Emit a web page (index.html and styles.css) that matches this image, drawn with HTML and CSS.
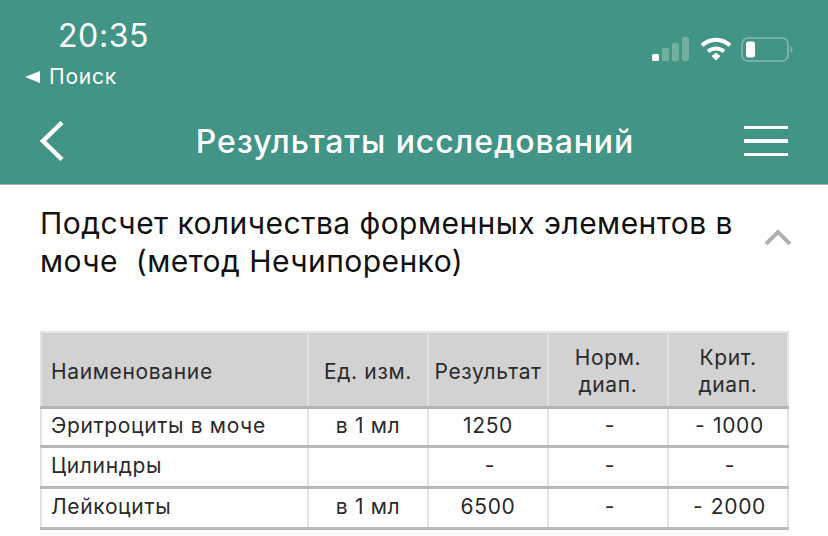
FILE: index.html
```html
<!DOCTYPE html>
<html lang="ru">
<head>
    <meta charset="UTF-8">
    <meta name="viewport" content="width=device-width, initial-scale=1.0">
    <title>Результаты исследований</title>
    <link rel="stylesheet" href="styles.css">
</head>
<body>

<header class="top">
    <div class="status">
        <div class="status-left">
            <div class="time">20:35</div>
            <div class="search"><span class="search-arrow"></span>Поиск</div>
        </div>
        <div class="status-right">
            <svg class="signal" width="38" height="24" viewBox="0 0 38 24">
                <rect x="0" y="17" width="7" height="7" rx="1.5" fill="#fff"/>
                <rect x="10" y="11" width="7" height="13" rx="1.5" fill="#fff" fill-opacity="0.25"/>
                <rect x="20" y="6" width="7" height="18" rx="1.5" fill="#fff" fill-opacity="0.25"/>
                <rect x="30" y="0" width="7" height="24" rx="1.5" fill="#fff" fill-opacity="0.25"/>
            </svg>
            <svg class="wifi" width="32" height="24" viewBox="0 0 32 24">
                <path d="M2 8.5C10 1 22 1 30 8.5" fill="none" stroke="#fff" stroke-width="4.2"/>
                <path d="M8 14.5C12.500 10.500 19.500 10.500 24 14.500" fill="none" stroke="#fff" stroke-width="4"/>
                <path d="M11.500 19L16 15.800L20.500 19L16 23.500Z" fill="#fff"/>
            </svg>
            <svg class="battery" width="54" height="26" viewBox="0 0 54 26">
                <rect x="1" y="1" width="46" height="23" rx="6" fill="none" stroke="#fff" stroke-opacity="0.35" stroke-width="1.600"/>
                <rect x="5" y="4.500" width="9" height="16" rx="2.500" fill="#fff"/>
                <path d="M49.500 9C52 10 52 15 49.500 16Z" fill="#fff" fill-opacity="0.35"/>
            </svg>
        </div>
    </div>
    <nav class="nav">
        <svg class="back" width="26" height="42" viewBox="0 0 26 42">
            <path d="M23 2.500L4 21L23 39.500" fill="none" stroke="#fff" stroke-width="4.500"/>
        </svg>
        <h1>Результаты исследований</h1>
        <div class="burger"><span></span><span></span><span></span></div>
    </nav>
</header>

<main class="content">
    <div class="title-row">
        <h2>Подсчет количества форменных элементов в моче&nbsp; (метод Нечипоренко)</h2>
        <svg class="chevron" width="28" height="16" viewBox="0 0 28 16">
            <path d="M2 15L14 3L26 15" fill="none" stroke="#b0b0b0" stroke-width="4"/>
        </svg>
    </div>

    <table class="results">
        <colgroup>
            <col class="col-name"><col class="col-std"><col class="col-std"><col class="col-std"><col class="col-std">
        </colgroup>
        <thead>
            <tr>
                <th class="name">Наименование</th>
                <th>Ед. изм.</th>
                <th>Результат</th>
                <th>Норм.<br>диап.</th>
                <th>Крит.<br>диап.</th>
            </tr>
        </thead>
        <tbody>
            <tr class="row-a">
                <td class="name">Эритроциты в моче</td>
                <td>в 1 мл</td>
                <td>1250</td>
                <td class="dash">-</td>
                <td class="crit">- 1000</td>
            </tr>
            <tr class="row-b">
                <td class="name">Цилиндры</td>
                <td></td>
                <td class="dash">-</td>
                <td class="dash">-</td>
                <td class="dash">-</td>
            </tr>
            <tr class="row-b">
                <td class="name">Лейкоциты</td>
                <td>в 1 мл</td>
                <td>6500</td>
                <td class="dash">-</td>
                <td class="crit">- 2000</td>
            </tr>
        </tbody>
    </table>
</main>

</body>
</html>
```

FILE: styles.css
```css
* {
    margin: 0;
    padding: 0;
    box-sizing: border-box;
}

body {
    font-family: Inter, "Liberation Sans", sans-serif;
    background-color: #fff;
    color: #2a2a2a;
    overflow: hidden;
}

/* Шапка */
.top {
    height: 185px;
    background-color: #429485;
    border-bottom: 1px solid #a9b5b2;
    color: #fff;
}

.status {
    display: flex;
    justify-content: space-between;
    height: 98px;
    padding: 18px 33px 0 25px;
}

.time {
    margin-left: 33px;
    font-size: 32px;
    line-height: 36px;
    letter-spacing: 0.6px;
}

.search {
    display: flex;
    align-items: center;
    gap: 9px;
    margin-top: 11px;
    font-size: 21px;
    line-height: 24px;
    letter-spacing: 0.8px;
}

.search-arrow {
    width: 0;
    height: 0;
    border-top: 6px solid transparent;
    border-bottom: 6px solid transparent;
    border-right: 15px solid #fff;
}

.status-right {
    display: flex;
    align-items: flex-start;
    gap: 9px;
    padding-top: 19px;
}

.wifi {
    margin-left: 1px;
}

.nav {
    display: flex;
    align-items: center;
    justify-content: space-between;
    height: 86px;
    padding: 0 40px 0 39px;
}

.nav h1 {
    margin-left: 21px;
    font-size: 32px;
    font-weight: 500;
    letter-spacing: 0.9px;
}

.burger {
    display: flex;
    flex-direction: column;
    gap: 10px;
    width: 44px;
}

.burger span {
    height: 3.500px;
    background-color: #fff;
}

/* Контент */
.content {
    padding: 15px 40px 0;
}

.title-row {
    display: flex;
    justify-content: space-between;
    align-items: center;
    height: 131px;
    padding-bottom: 47px;
}

.title-row h2 {
    width: 710px;
    font-size: 30px;
    font-weight: 400;
    line-height: 38px;
    letter-spacing: 0.45px;
    color: #111;
}

.chevron {
    margin-right: -4px;
    margin-top: -10px;
}

.results {
    width: 747px;
    table-layout: fixed;
    border-collapse: collapse;
    font-size: 21px;
    letter-spacing: 0.65px;
}

.col-name {
    width: 267px;
}

.col-std {
    width: 120px;
}

.results th,
.results td {
    border-left: 2px solid #e3e3e3;
    border-right: 2px solid #e3e3e3;
    text-align: center;
    font-weight: 400;
}

.results th {
    height: 75px;
    padding-top: 4px;
    line-height: 27px;
    background-color: #d2d2d2;
    border-top: 2px solid #e6e6e6;
    border-bottom: 3px solid #b4b4b4;
}

.results td {
    padding-bottom: 3px;
    border-bottom: 3px solid #b8b8b8;
}

.row-a td {
    height: 39px;
}

.row-b td {
    height: 41px;
}

.results .dash {
    padding-left: 4px;
}

.results .crit {
    padding-left: 3px;
    word-spacing: 1px;
}

.results .name {
    text-align: left;
    padding-left: 9px;
}
```
